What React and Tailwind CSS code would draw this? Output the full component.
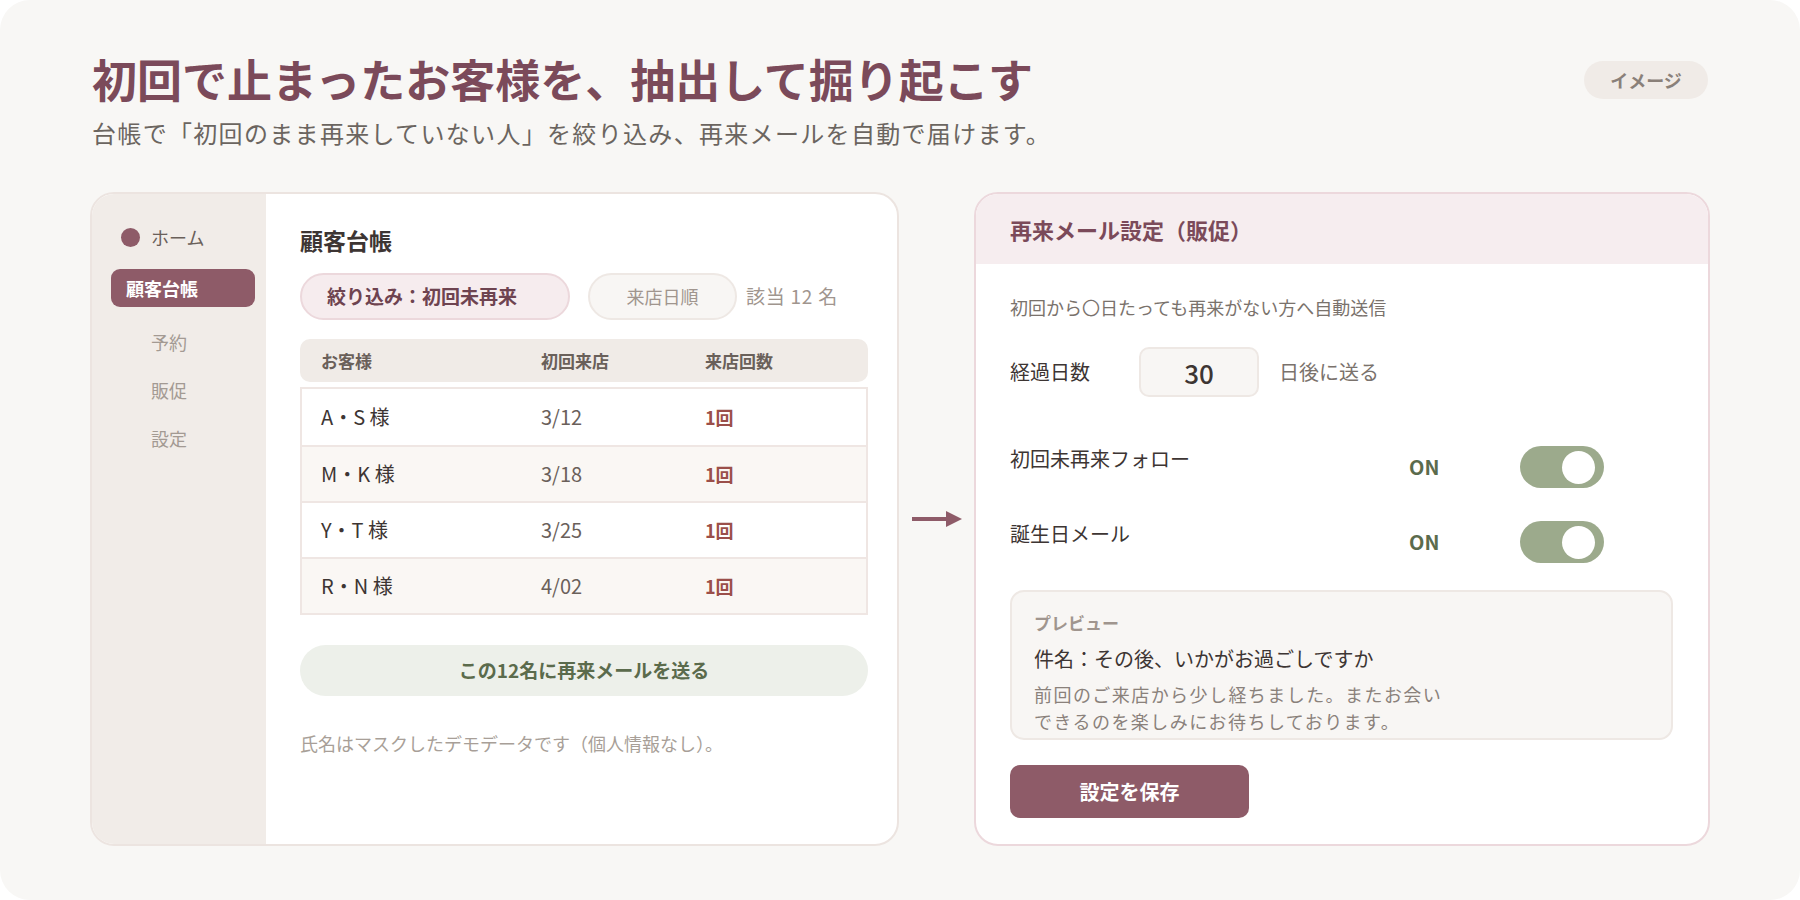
import React from "react";

const customers = [
  { name: "A・S 様", first: "3/12", count: "1回" },
  { name: "M・K 様", first: "3/18", count: "1回" },
  { name: "Y・T 様", first: "3/25", count: "1回" },
  { name: "R・N 様", first: "4/02", count: "1回" },
];

const font = { fontFamily: '"Noto Sans CJK JP", "Noto Sans", sans-serif' };

function Toggle() {
  return (
    <div className="w-[84px] h-[42px] rounded-full bg-[#9caa8c] flex items-center justify-end pr-[9px]">
      <div className="w-[33px] h-[33px] rounded-full bg-white" />
    </div>
  );
}

function Sidebar() {
  return (
    <div className="w-[174px] shrink-0 bg-[#f1ece8] pl-[19px] pt-[29px]">
      <div className="flex items-center gap-[11px] h-[28px] pl-[10px]">
        <span className="w-[19px] h-[19px] rounded-full bg-[#8e5b68]" />
        <span className="text-[18px] text-[#6a605a]">ホーム</span>
      </div>
      <div className="mt-[18px] w-[144px] h-[38px] rounded-[9px] bg-[#8e5b68] flex items-center pl-[15px]">
        <span className="text-[18px] font-bold text-white">顧客台帳</span>
      </div>
      <div className="pl-[40px] mt-[21px] flex flex-col gap-[20px] text-[18px] text-[#a39a93] leading-[28px]">
        <span>予約</span>
        <span>販促</span>
        <span>設定</span>
      </div>
    </div>
  );
}

function Ledger() {
  return (
    <div className="flex-1 pl-[34px] pr-[29px] pt-[30px]">
      <h2 className="text-[23px] font-bold text-[#3d3533] leading-[32px]">顧客台帳</h2>

      {/* filter row */}
      <div className="mt-[17px] flex items-center">
        <div className="w-[270px] h-[47px] rounded-full bg-[#f6ecee] border-2 border-[#ecd8dc] flex items-center pl-[25px]">
          <span className="text-[19px] font-bold text-[#6e4350]">絞り込み：初回未再来</span>
        </div>
        <div className="ml-[18px] w-[149px] h-[47px] rounded-full bg-[#f8f6f4] border-2 border-[#eee8e4] flex items-center justify-center">
          <span className="text-[18px] text-[#a0958e]">来店日順</span>
        </div>
        <span className="ml-[9px] text-[19px] tracking-[0.04em] text-[#a0958e]">該当 12 名</span>
      </div>

      {/* table */}
      <div className="mt-[19px] h-[43px] rounded-[10px] bg-[#f0ebe7] flex items-center text-[17px] font-bold text-[#6a605a]">
        <span className="w-[241px] pl-[21px]">お客様</span>
        <span className="w-[164px]">初回来店</span>
        <span>来店回数</span>
      </div>
      <div className="mt-[5px] border-2 border-[#efe6e3]">
        {customers.map((c, i) => (
          <div
            key={c.name}
            className={`h-[56px] flex items-center ${i > 0 ? "border-t-2 border-[#efe6e3]" : ""} ${
              i % 2 === 1 ? "bg-[#faf7f4]" : "bg-white"
            }`}
          >
            <span className="w-[239px] pl-[19px] text-[20px] text-[#3d3533]">{c.name}</span>
            <span className="w-[164px] text-[20px] text-[#6a605a]">{c.first}</span>
            <span className="text-[18px] font-bold text-[#9b4f4a]">{c.count}</span>
          </div>
        ))}
      </div>

      <button className="mt-[30px] w-full h-[51px] rounded-full bg-[#edf0ea] text-[19px] font-bold text-[#5b6b4c]">
        この12名に再来メールを送る
      </button>

      <p className="mt-[35px] text-[18px] text-[#a89f98] leading-[24px]">
        氏名はマスクしたデモデータです（個人情報なし）。
      </p>
    </div>
  );
}

function MailSettings() {
  return (
    <div className="w-[736px] h-[654px] shrink-0 rounded-[24px] border-2 border-[#ecd8dc] bg-white overflow-hidden flex flex-col">
      <div className="h-[70px] bg-[#f6edef] flex items-center pl-[34px]">
        <span className="text-[22px] font-bold text-[#7b4a5a]">再来メール設定（販促）</span>
      </div>
      <div className="pl-[34px] pr-[35px] pt-[30px]">
        <p className="text-[18px] text-[#7a726c] leading-[26px]">初回から〇日たっても再来がない方へ自動送信</p>

        <div className="mt-[27px] flex items-center">
          <span className="w-[129px] text-[20px] text-[#3d3533]">経過日数</span>
          <div className="w-[120px] h-[50px] rounded-[10px] bg-[#f8f6f4] border-2 border-[#eee8e4] flex items-center justify-center">
            <span className="text-[26px] font-medium text-[#3d3533]">30</span>
          </div>
          <span className="ml-[20px] text-[20px] text-[#7a726c]">日後に送る</span>
        </div>

        <div className="mt-[49px] flex items-start">
          <span className="w-[399px] -mt-[1px] leading-[28px] text-[20px] text-[#3d3533]">初回未再来フォロー</span>
          <span className="w-[111px] h-[42px] flex items-center text-[20px] font-bold text-[#5b6b4c]">ON</span>
          <Toggle />
        </div>

        <div className="mt-[33px] flex items-start">
          <span className="w-[399px] -mt-[1px] leading-[28px] text-[20px] text-[#3d3533]">誕生日メール</span>
          <span className="w-[111px] h-[42px] flex items-center text-[20px] font-bold text-[#5b6b4c]">ON</span>
          <Toggle />
        </div>

        <div className="mt-[27px] w-[663px] h-[150px] rounded-[14px] bg-[#f8f6f4] border-2 border-[#eee8e4] pl-[22px] pt-[20px] overflow-hidden">
          <p className="text-[17px] font-bold text-[#a0958e] leading-[22px]">プレビュー</p>
          <p className="mt-[11px] text-[20px] text-[#3d3533] leading-[28px]">件名：その後、いかがお過ごしですか</p>
          <p className="mt-[8px] text-[18px] tracking-[0.08em] text-[#8a817b] leading-[27px]">
            前回のご来店から少し経ちました。またお会い
            <br />
            できるのを楽しみにお待ちしております。
          </p>
        </div>

        <button className="mt-[25px] w-[239px] h-[53px] rounded-[10px] bg-[#8e5b68] text-[20px] font-bold text-white">
          設定を保存
        </button>
      </div>
    </div>
  );
}

export default function App() {
  return (
    <div className="w-[1800px] h-[900px] bg-white" style={font}>
      <div className="w-full h-full rounded-[30px] bg-[#f8f7f5] px-[90px] pt-[52px]">
        {/* header */}
        <div className="flex items-start justify-between">
          <div className="pl-[2px]">
            <h1 className="text-[45px] font-bold leading-[54px] text-[#7b4a5a]">
              初回で止まったお客様を、抽出して掘り起こす
            </h1>
            <p className="mt-[11px] text-[24px] leading-[32px] text-[#6b6560] tracking-[0.055em]">
              台帳で「初回のまま再来していない人」を絞り込み、再来メールを自動で届けます。
            </p>
          </div>
          <div className="mt-[9px] mr-[2px] w-[124px] h-[38px] rounded-full bg-[#f0ebe7] flex items-center justify-center">
            <span className="text-[18px] font-bold text-[#8a8079]">イメージ</span>
          </div>
        </div>

        {/* panels */}
        <div className="mt-[43px] flex items-center">
          <div className="w-[809px] h-[654px] shrink-0 rounded-[24px] border-2 border-[#ece4e0] bg-white overflow-hidden flex">
            <Sidebar />
            <Ledger />
          </div>
          <div className="flex-1 flex justify-center">
            <svg width="50" height="20" viewBox="0 0 50 20">
              <rect x="0" y="8" width="36" height="4" fill="#8e5b68" />
              <polygon points="34,2 50,10 34,18" fill="#8e5b68" />
            </svg>
          </div>
          <MailSettings />
        </div>
      </div>
    </div>
  );
}
